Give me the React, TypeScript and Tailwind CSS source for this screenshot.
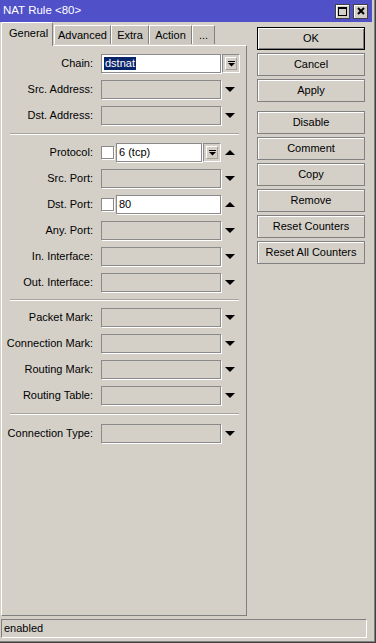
import React from "react";

const Down = () => (
  <svg width="10" height="5" viewBox="0 0 10 5"><polygon points="0,0 10,0 5,5" fill="#000" /></svg>
);
const Up = () => (
  <svg width="10" height="5" viewBox="0 0 10 5"><polygon points="0,5 10,5 5,0" fill="#000" /></svg>
);

const DropBtn = () => (
  <div className="ml-[1px] w-[18px] h-[19px] border border-[#8a8a8a] border-r-white border-b-white flex flex-col items-center justify-center">
    <div className="w-[12px] h-[13px] border border-[#a8a49c] border-t-white border-l-white flex items-center justify-center">
      <svg width="7" height="6" viewBox="0 0 7 6">
        <rect x="0" y="0" width="7" height="1" fill="#000" />
        <polygon points="0,2 7,2 3.5,5.5" fill="#000" />
      </svg>
    </div>
  </div>
);

const Field = ({ white, children, w }: { white?: boolean; children?: React.ReactNode; w: string }) => (
  <div
    className={`${w} h-[19px] border border-[#8a8a8a] shadow-[1px_1px_0_#ffffff] flex items-center pl-[2px] ${white ? "bg-white" : ""}`}
  >
    {children}
  </div>
);

const Check = () => <div className="w-[13px] h-[13px] border border-[#8a8a8a] bg-white shadow-[1px_1px_0_#ffffff] mr-[2px]" />;

const Label = ({ t }: { t: string }) => (
  <div className="w-[92px] text-right pr-[1px] whitespace-nowrap">{t}</div>
);

const Row = ({ label, children }: { label: string; children: React.ReactNode }) => (
  <div className="flex items-center h-[19px]">
    <Label t={label} />
    <div className="ml-[7px] flex items-center">{children}</div>
  </div>
);

const EmptyRow = ({ label }: { label: string }) => (
  <Row label={label}>
    <Field w="w-[120px]" />
    <div className="w-[18px] flex justify-center items-center"><Down /></div>
  </Row>
);

const Sep = ({ mt, mb }: { mt: string; mb: string }) => (
  <div className={`${mt} ${mb} ml-[8px] w-[229px] h-[2px] border-t border-[#a8a49c] border-b border-b-white`} />
);

const Btn = ({ t, def, mt }: { t: string; def?: boolean; mt?: string }) => (
  <div
    className={`${mt ?? ""} h-[23px] w-[108px] flex items-center justify-center ${
      def
        ? "border border-black shadow-[inset_1px_1px_0_#ffffff,inset_-1px_-1px_0_#808080]"
        : "border border-[#808080] shadow-[inset_1px_1px_0_#ffffff]"
    }`}
  >
    {t}
  </div>
);

export default function App() {
  return (
    <div
      className="w-[376px] h-[643px] bg-[#404040] pr-[1px] pb-[1px] text-[11px] text-black"
      style={{ fontFamily: '"Liberation Sans", Arial, sans-serif' }}
    >
      <div className="w-full h-full bg-[#808080] pr-[1px] pb-[1px]">
        <div className="w-full h-full bg-[#d4d0c8] pr-[2px] pb-[1px] flex flex-col">
          {/* title bar */}
          <div className="h-[22px] bg-[#5050c8] flex items-center justify-between pl-[3px] pr-[4px] shrink-0">
            <div className="text-white text-[11.5px] leading-none">NAT Rule &lt;80&gt;</div>
            <div className="flex gap-[3px] items-center">
              <div className="w-[15px] h-[15px] bg-[#d4d0c8] border border-[#404040] shadow-[inset_1px_1px_0_#fff] flex items-center justify-center">
                <div className="w-[9px] h-[9px] border border-black border-t-2" />
              </div>
              <div className="w-[15px] h-[15px] bg-[#d4d0c8] border border-[#404040] shadow-[inset_1px_1px_0_#fff] flex items-center justify-center">
                <svg width="8" height="8" viewBox="0 0 8 8">
                  <path d="M1 1L7 7M7 1L1 7" stroke="#000" strokeWidth="2" />
                </svg>
              </div>
            </div>
          </div>

          {/* body */}
          <div className="flex-1 flex">
            {/* left column */}
            <div className="w-[246px] ml-[1px] flex flex-col">
              <div className="h-[23px] flex items-end relative z-10">
                <div className="h-[24px] -mb-[1px] w-[52px] bg-[#d4d0c8] border-t border-l border-white border-r border-r-[#808080] rounded-t-[2px] flex items-center pl-[7px] pb-[2px]">
                  General
                </div>
                <div className="h-[19px] mb-[1px] w-[57px] ml-[1px] bg-[#ccc8c0] border-t border-l border-white border-r border-r-[#808080] flex items-center justify-center">
                  Advanced
                </div>
                <div className="h-[19px] mb-[1px] w-[38px] bg-[#ccc8c0] border-t border-l border-white border-r border-r-[#808080] flex items-center justify-center">
                  Extra
                </div>
                <div className="h-[19px] mb-[1px] w-[43px] bg-[#ccc8c0] border-t border-l border-white border-r border-r-[#808080] flex items-center justify-center">
                  Action
                </div>
                <div className="h-[19px] mb-[1px] w-[23px] bg-[#ccc8c0] border-t border-l border-white border-r border-r-[#808080] flex items-center justify-center">
                  ...
                </div>
              </div>
              <div className="flex-1 border-t border-l border-white border-r border-r-[#808080] border-b border-b-[#808080] pt-[8px] flex flex-col">
                <div className="flex flex-col gap-[7px]">
                  <Row label="Chain:">
                    <Field w="w-[120px]" white>
                      <span className="bg-[#0a246a] text-white leading-[13px] px-[1px]">dstnat</span>
                    </Field>
                    <DropBtn />
                  </Row>
                  <EmptyRow label="Src. Address:" />
                  <EmptyRow label="Dst. Address:" />
                </div>
                <Sep mt="mt-[8px]" mb="mb-[8px]" />
                <div className="flex flex-col gap-[7px]">
                  <Row label="Protocol:">
                    <Check />
                    <Field w="w-[86px]" white>6 (tcp)</Field>
                    <DropBtn />
                    <div className="w-[18px] flex justify-center items-center"><Up /></div>
                  </Row>
                  <EmptyRow label="Src. Port:" />
                  <Row label="Dst. Port:">
                    <Check />
                    <Field w="w-[105px]" white>80</Field>
                    <div className="w-[18px] flex justify-center items-center"><Up /></div>
                  </Row>
                  <EmptyRow label="Any. Port:" />
                  <EmptyRow label="In. Interface:" />
                  <EmptyRow label="Out. Interface:" />
                </div>
                <Sep mt="mt-[7px]" mb="mb-[7px]" />
                <div className="flex flex-col gap-[7px]">
                  <EmptyRow label="Packet Mark:" />
                  <EmptyRow label="Connection Mark:" />
                  <EmptyRow label="Routing Mark:" />
                  <EmptyRow label="Routing Table:" />
                </div>
                <Sep mt="mt-[8px]" mb="mb-[9px]" />
                <div className="flex flex-col gap-[7px]">
                  <EmptyRow label="Connection Type:" />
                </div>
              </div>
            </div>

            {/* right buttons */}
            <div className="ml-[10px] pt-[5px] flex flex-col gap-[3px]">
              <Btn t="OK" def />
              <Btn t="Cancel" />
              <Btn t="Apply" />
              <Btn t="Disable" mt="mt-[6px]" />
              <Btn t="Comment" />
              <Btn t="Copy" />
              <Btn t="Remove" />
              <Btn t="Reset Counters" />
              <Btn t="Reset All Counters" />
            </div>
          </div>

          {/* status bar */}
          <div className="h-[24px] pt-[3px] pb-[2px] pl-[1px] shrink-0">
            <div className="h-[19px] w-[366px] border border-[#808080] border-r-white border-b-white flex items-center pl-[2px]">
              enabled
            </div>
          </div>
        </div>
      </div>
    </div>
  );
}
